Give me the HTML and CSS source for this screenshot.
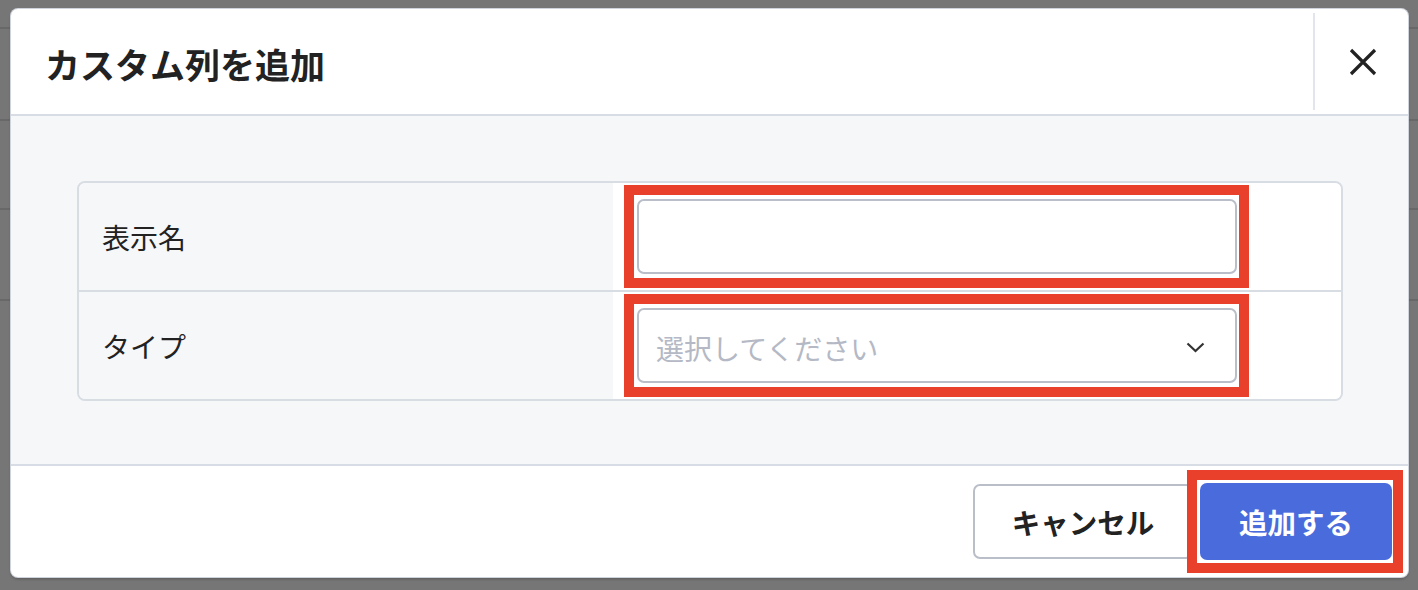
FILE: index.html
```html
<!DOCTYPE html>
<html lang="ja">
<head>
  <meta charset="UTF-8" />
  <title>カスタム列を追加</title>
  <link rel="stylesheet" href="styles.css">
</head>
<body>
  <div class="modal">
    <!-- ヘッダー -->
    <div class="modal-header">
      <h2 class="modal-title">カスタム列を追加</h2>
      <button class="close-btn" aria-label="閉じる">
        <svg width="28" height="28" viewBox="0 0 28 28">
          <path d="M2 2 L26 26 M26 2 L2 26" stroke="#222" stroke-width="3.2" fill="none" />
        </svg>
      </button>
    </div>

    <!-- フォーム -->
    <div class="modal-body">
      <div class="form-table">
        <div class="form-row">
          <div class="form-label">表示名</div>
          <div class="form-value">
            <span class="mark">
              <input type="text" class="text-input" />
            </span>
          </div>
        </div>
        <div class="form-row">
          <div class="form-label">タイプ</div>
          <div class="form-value">
            <span class="mark">
              <div class="select-box">
                <span class="placeholder">選択してください</span>
                <svg width="19" height="11" viewBox="0 0 19 11">
                  <path d="M1.5 1.5 L9.5 9 L17.5 1.5" stroke="#333" stroke-width="2.2" fill="none" />
                </svg>
              </div>
            </span>
          </div>
        </div>
      </div>
    </div>

    <!-- フッター -->
    <div class="modal-footer">
      <button class="btn btn-cancel">キャンセル</button>
      <span class="mark mark-btn">
        <button class="btn btn-primary">追加する</button>
      </span>
    </div>
  </div>
</body>
</html>
```

FILE: styles.css
```css
body {
  margin: 0;
  height: 590px;
  overflow: hidden;
  font-family: "Noto Sans CJK JP", "Noto Sans", sans-serif;
  color: #222;
  background:
    linear-gradient(#686868, #686868) 0 27px / 100% 2px no-repeat,
    linear-gradient(#686868, #686868) 0 119px / 100% 2px no-repeat,
    linear-gradient(#686868, #686868) 0 208px / 100% 2px no-repeat,
    linear-gradient(#686868, #686868) 0 299px / 100% 2px no-repeat,
    #767676;
}

/* ダイアログ全体 */
.modal {
  width: 1397px;
  height: 568px;
  margin: 9px 0 0 11px;
  background: #fff;
  border-radius: 7px;
  overflow: hidden;
  box-shadow: 0 0 0 1px #cfd3db, 0 2px 3px rgba(0,0,0,0.25);
  display: flex;
  flex-direction: column;
}

.modal-header {
  height: 105px;
  display: flex;
  align-items: stretch;
  border-bottom: 2px solid #d8dce4;
}

.modal-title {
  flex: 1;
  margin: 0;
  padding: 3px 0 0 34px;
  display: flex;
  align-items: center;
  font-size: 35px;
  font-weight: 700;
  color: #222;
}

.close-btn {
  width: 95px;
  margin: 4px 0;
  border: none;
  border-left: 2px solid #e2e5eb;
  background: none;
  padding: 0 0 0 2px;
  display: flex;
  align-items: center;
  justify-content: center;
  cursor: pointer;
}

/* 本文 */
.modal-body {
  height: 350px;
  box-sizing: border-box;
  padding: 65px 65px 0 66px;
  background: #f6f7f9;
  border-bottom: 2px solid #d8dce4;
}

.form-table {
  border: 2px solid #d8dce3;
  border-radius: 8px;
  overflow: hidden;
}

.form-row {
  display: flex;
  height: 107px;
}

.form-row + .form-row {
  border-top: 2px solid #d8dce3;
}

.form-label {
  width: 534px;
  padding-left: 23px;
  box-sizing: border-box;
  display: flex;
  align-items: center;
  background: #f6f7f9;
  font-size: 28px;
}

.form-value {
  flex: 1;
  display: flex;
  align-items: center;
  padding-left: 11px;
  background: #fff;
}

/* 赤い強調枠 */
.mark {
  display: inline-flex;
  border: 10px solid #e8402a;
  padding: 4px 2px 4px 3px;
  background: #fff;
}

.text-input,
.select-box {
  width: 600px;
  height: 75px;
  box-sizing: border-box;
  border: 2px solid #b9bec9;
  border-radius: 7px;
  background: #fff;
  font-family: inherit;
  font-size: 28px;
}

.select-box {
  display: flex;
  align-items: center;
  justify-content: space-between;
  padding: 4px 30px 0 17px;
}

.placeholder {
  color: #b4b9c5;
  font-size: 28px;
}

/* フッター */
.modal-footer {
  flex: 1;
  display: flex;
  align-items: center;
  justify-content: flex-end;
  padding-right: 5px;
}

.btn {
  height: 77px;
  border-radius: 7px;
  font-family: inherit;
  font-size: 28.5px;
  font-weight: 700;
  cursor: pointer;
}

.btn-cancel {
  width: 220px;
  height: 75px;
  margin-right: -6px;
  background: #fff;
  color: #222;
  border: 2px solid #b9bec9;
}

.mark-btn {
  padding: 3px 1px 3px 3px;
}

.btn-primary {
  width: 192px;
  background: #4a6bdc;
  color: #fff;
  border: none;
}
```
